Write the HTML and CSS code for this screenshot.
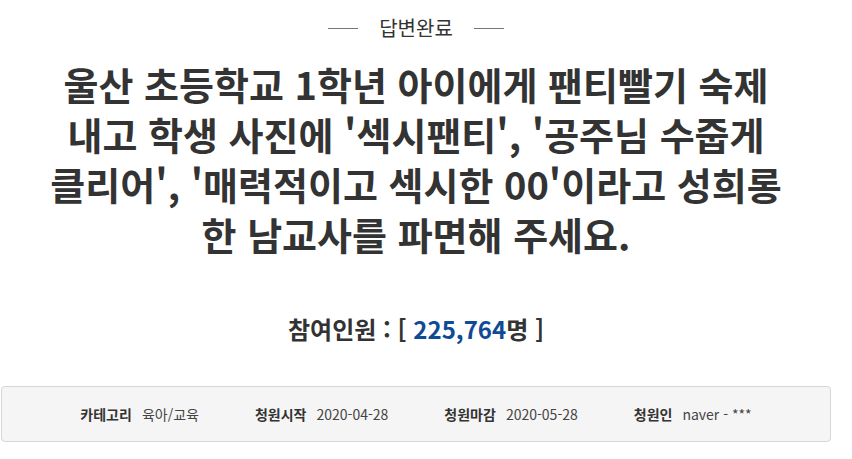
FILE: index.html
```html
<!DOCTYPE html>
<html lang="ko">
<head>
<meta charset="utf-8">
<link rel="stylesheet" href="styles.css">
</head>
<body>
<div class="page">
  <div class="status">
    <span class="rule"></span>
    <span class="status-text">답변완료</span>
    <span class="rule"></span>
  </div>
  <h1 class="title">울산 초등학교 1학년 아이에게 팬티빨기 숙제<br>내고 학생 사진에 '섹시팬티', '공주님 수줍게<br>클리어', '매력적이고 섹시한 00'이라고 성희롱<br>한 남교사를 파면해 주세요.</h1>
  <p class="count">참여인원 : [ <span class="num">225,764</span>명 ]</p>
  <ul class="info">
    <li class="item"><span class="label">카테고리</span><span class="value">육아/교육</span></li>
    <li class="item"><span class="label">청원시작</span><span class="value">2020-04-28</span></li>
    <li class="item"><span class="label">청원마감</span><span class="value">2020-05-28</span></li>
    <li class="item"><span class="label">청원인</span><span class="value">naver - ***</span></li>
  </ul>
</div>
</body>
</html>
```

FILE: styles.css
```css
* { box-sizing: border-box; }
html, body { margin: 0; padding: 0; background: #fff; }
body {
  font-family: "Noto Sans CJK KR", "Noto Sans", sans-serif;
  color: #333;
}
.page {
  width: 830px;
  margin-left: 1px;
  padding-top: 16px;
}
.status {
  display: flex;
  justify-content: center;
  align-items: center;
  gap: 21px;
  height: 24px;
}
.rule {
  width: 30px;
  height: 1px;
  background: #777;
}
.status-text {
  font-size: 20px;
  line-height: 24px;
  color: #333;
}
.title {
  margin: 19px 0 0;
  text-align: center;
  font-size: 38px;
  line-height: 50px;
  font-weight: 700;
  color: #333;
}
.count {
  margin: 55px 0 0;
  text-align: center;
  font-size: 24px;
  line-height: 30px;
  font-weight: 700;
  color: #333;
}
.num { color: #0e4a96; }
.info {
  list-style: none;
  margin: 42px 0 0;
  padding: 0;
  height: 56px;
  background: #f5f5f5;
  border: 1px solid #d6d6d6;
  border-radius: 4px;
  display: flex;
  justify-content: center;
  align-items: center;
  gap: 56px;
  font-size: 14px;
}
.item { display: flex; gap: 10px; align-items: center; }
.label { font-weight: 700; color: #333; }
.value { color: #444; }
```
